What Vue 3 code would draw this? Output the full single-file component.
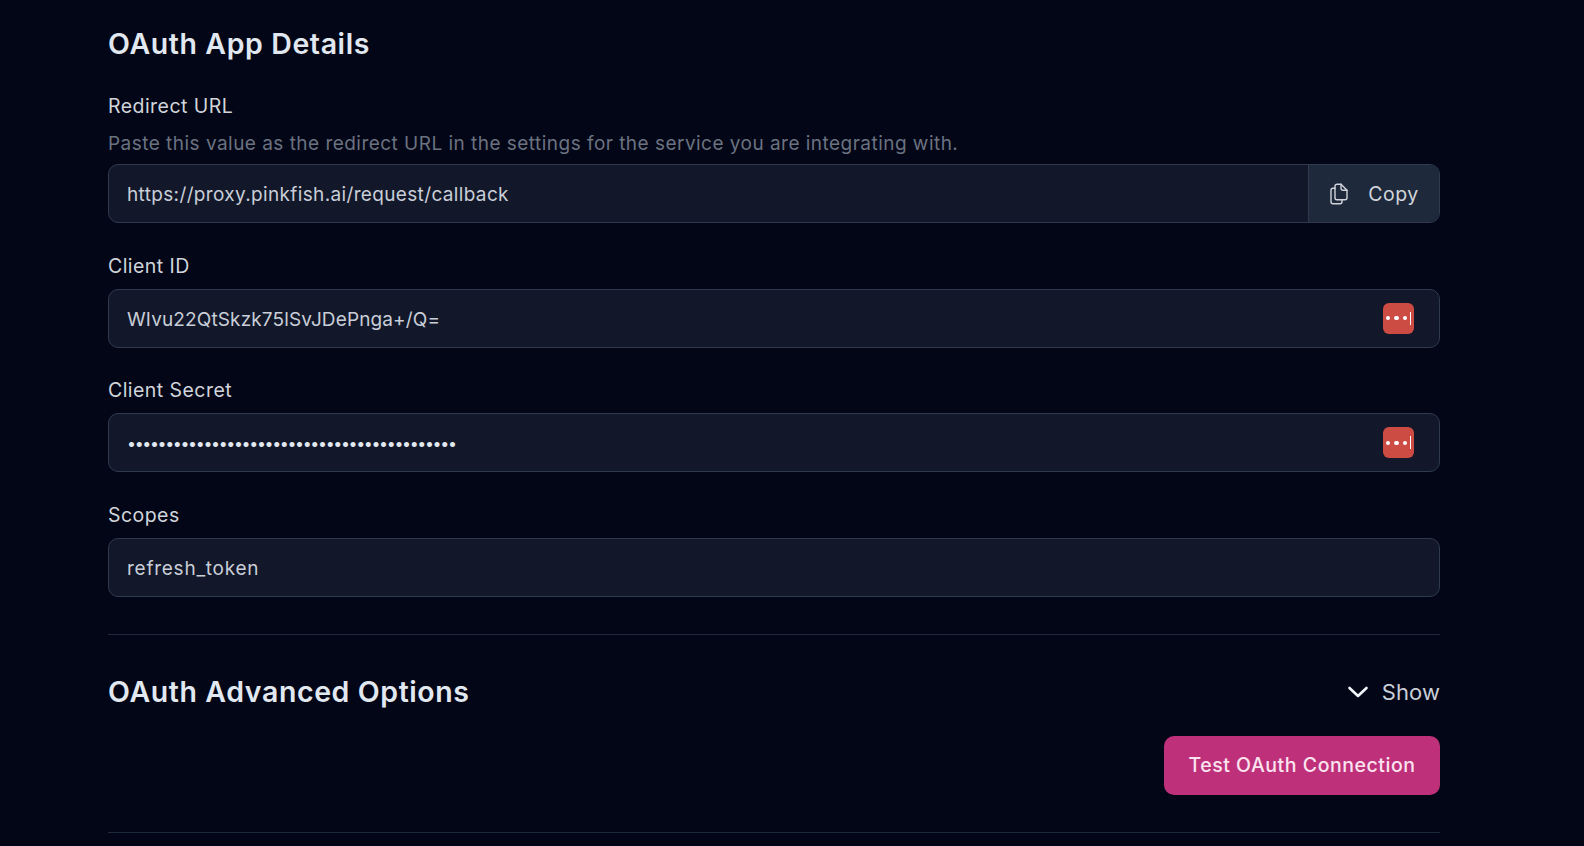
<template>
  <div class="page">
    <h2 class="title">OAuth App Details</h2>

    <div class="field first">
      <label class="label tight">Redirect URL</label>
      <p class="hint">Paste this value as the redirect URL in the settings for the service you are integrating with.</p>
      <div class="input-box">
        <span class="value">{{ redirectUrl }}</span>
        <button class="copy-btn">
          <svg width="20" height="22" viewBox="0 0 20 22" fill="none" stroke="currentColor" stroke-width="1.4" stroke-linejoin="round" stroke-linecap="round">
            <path d="M6 3.2C6 2 6.8 1.2 8 1.2h4l6 6v7.6c0 1.2-.8 2-2 2H8c-1.200 0-2-.8-2-2z" />
            <path d="M12 1.200v4.300c0 1 .7 1.700 1.700 1.700H18" />
            <path d="M6 5.200H4c-1.200 0-2 .8-2 2v11.600c0 1.200.8 2 2 2h7c1.200 0 2-.8 2-2v-2" />
          </svg>
          <span>Copy</span>
        </button>
      </div>
    </div>

    <div v-for="item in fields" :key="item.label" class="field">
      <label class="label">{{ item.label }}</label>
      <div class="input-box">
        <span class="value" :class="item.kind">{{ item.value }}</span>
        <span v-if="item.pass" class="pass-icon">
          <i></i><i></i><i></i><b></b>
        </span>
      </div>
    </div>

    <hr class="line top-line" />

    <div class="advanced">
      <h2 class="title">OAuth Advanced Options</h2>
      <div class="toggle">
        <svg width="22" height="14" viewBox="0 0 22 14" fill="none" stroke="currentColor" stroke-width="2.6" stroke-linecap="round" stroke-linejoin="round">
          <path d="M2.500 3l8.500 8 8.500-8" />
        </svg>
        <span>Show</span>
      </div>
    </div>

    <div class="actions">
      <button class="test-btn">Test OAuth Connection</button>
    </div>

    <hr class="line" />
  </div>
</template>

<script setup>
const redirectUrl = 'https://proxy.pinkfish.ai/request/callback'

const fields = [
  { label: 'Client ID', value: 'WIvu22QtSkzk75lSvJDePnga+/Q=', kind: 'id', pass: true },
  { label: 'Client Secret', value: '•'.repeat(43), kind: 'dots', pass: true },
  { label: 'Scopes', value: 'refresh_token', kind: 'scope' }
]
</script>

<style>
html,
body {
  margin: 0;
  background: #020617;
}
</style>

<style scoped>
.page {
  box-sizing: border-box;
  width: 1332px;
  height: 846px;
  margin-left: 108px;
  padding-top: 26px;
  overflow: hidden;
  font-family: Inter, "Noto Sans", sans-serif;
}

.title {
  margin: 0;
  font-size: 28.500px;
  line-height: 36px;
  font-weight: 600;
  letter-spacing: 0.600px;
  color: #e2e8f0;
}

.field {
  margin-top: 30.670px;
}

.field.first {
  margin-top: 32px;
}

.label {
  display: block;
  margin-bottom: 11px;
  font-size: 19.500px;
  line-height: 24px;
  font-weight: 400;
  letter-spacing: 0.450px;
  color: #d1d5db;
}

.label.tight {
  margin-bottom: 14px;
}

.hint {
  margin: 0 0 8px;
  font-size: 19px;
  line-height: 24px;
  letter-spacing: 0.470px;
  color: #6b7280;
}

.input-box {
  box-sizing: border-box;
  display: flex;
  align-items: center;
  height: 59px;
  padding-left: 18px;
  border: 1.500px solid #2f3a4f;
  border-radius: 10px;
  background: #121829;
  overflow: hidden;
}

.value {
  flex: 1;
  padding-top: 2px;
  font-size: 19px;
  letter-spacing: 0.350px;
  color: #c9ced8;
}

.value.id {
  letter-spacing: 0.130px;
}

.value.scope {
  letter-spacing: 0.750px;
}

.value.dots {
  padding-top: 0;
  font-size: 16px;
  letter-spacing: -1.360px;
  color: #e2e8f0;
}

.copy-btn {
  display: flex;
  align-items: center;
  justify-content: center;
  gap: 19px;
  width: 131px;
  height: 100%;
  padding: 0;
  border: 0;
  border-left: 1.500px solid #2f3a4f;
  background: #1e293b;
  color: #d1d5db;
  font-family: inherit;
  font-size: 19.500px;
  letter-spacing: 0.500px;
}

.pass-icon {
  display: flex;
  align-items: center;
  justify-content: center;
  gap: 4px;
  width: 31px;
  height: 31px;
  margin-right: 25px;
  border-radius: 6px;
  background: #cc4b42;
}

.pass-icon i {
  width: 4.500px;
  height: 4.500px;
  border-radius: 50%;
  background: #fff;
}

.pass-icon b {
  width: 1.500px;
  height: 13px;
  margin-left: -1.500px;
  background: #fff;
}

.line {
  margin: 0;
  border: 0;
  border-top: 1.500px solid #1e293b;
}

.top-line {
  margin-top: 37px;
}

.advanced {
  display: flex;
  align-items: center;
  justify-content: space-between;
  margin-top: 39px;
}

.toggle {
  display: flex;
  align-items: center;
  gap: 13px;
  font-size: 22px;
  letter-spacing: 0.100px;
  color: #c9ced8;
}

.toggle svg {
  color: #f1f5f9;
}

.actions {
  display: flex;
  justify-content: flex-end;
  margin-top: 26px;
}

.test-btn {
  width: 276px;
  height: 59px;
  border: 0;
  border-radius: 10px;
  background: #be317a;
  color: #fbe4f0;
  font-family: inherit;
  font-size: 19.500px;
  font-weight: 500;
  letter-spacing: 0.550px;
}

.actions + .line {
  margin-top: 37px;
}
</style>
